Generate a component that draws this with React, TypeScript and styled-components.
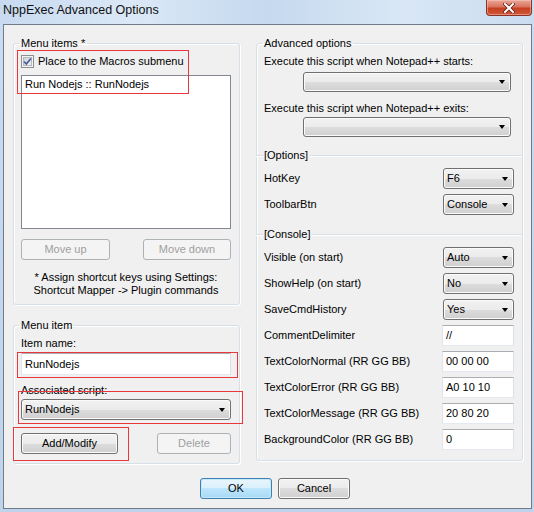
import React from 'react'
import styled, {createGlobalStyle, css} from 'styled-components'

const GlobalStyle = createGlobalStyle`
  html, body {
    margin: 0;
    padding: 0;
  }

  body {
    width: 534px;
    height: 512px;
    overflow: hidden;
    font-family: "Liberation Sans", Arial, sans-serif;
    font-size: 11px;
    line-height: 13px;
    color: #000;
  }
`

const Window = styled.div`
  position: relative;
  width: 534px;
  height: 512px;
  display: flex;
  flex-direction: column;
  background: linear-gradient(180deg, #c9dcf1 0%, #bfd3ea 100%);
`

const TitleBar = styled.div`
  height: 24px;
  flex: none;
  display: flex;
  justify-content: space-between;
  align-items: flex-start;
  padding-left: 3px;
  background: linear-gradient(90deg, #c7daf0 0%, #dbe8f6 25%, #c5d9ef 50%, #d9e7f5 75%, #cadcf0 100%);
`

const Title = styled.span`
  margin-top: 3px;
  font-size: 12.5px;
  line-height: 15px;
  color: #111;
`

const CloseButton = styled.div`
  width: 46px;
  height: 16px;
  margin-right: 2px;
  box-sizing: border-box;
  display: flex;
  align-items: center;
  justify-content: center;
  border: 1px solid #8a3223;
  border-top: none;
  border-radius: 0 0 4px 4px;
  background: linear-gradient(180deg, #e9a797 0%, #d9735e 45%, #c4401f 55%, #d1583c 100%);
  box-shadow: inset 0 0 0 1px rgba(255, 210, 200, 0.45);
`

const Client = styled.div`
  flex: 1;
  margin: 0 2px 3px 3px;
  border: 1px solid #6f7c8a;
  background: #f0f0f0;
  display: flex;
  flex-direction: column;
`

const Columns = styled.div`
  display: flex;
  gap: 16px;
  padding: 12px 8px 0 9px;
`

const Column = styled.div<{ $width: number }>`
  width: ${p => p.$width}px;
  display: flex;
  flex-direction: column;
  gap: 14px;
`

const GroupBox = styled.fieldset<{ $height: number }>`
  margin: 0;
  padding: 0 8px 0 7px;
  min-width: 0;
  height: ${p => p.$height}px;
  box-sizing: border-box;
  border: 1px solid #d5dfe5;
  border-radius: 3px;
  box-shadow: 1px 1px 0 #fff, inset 1px 1px 0 #fff;
  display: flex;
  flex-direction: column;
`

const Legend = styled.legend`
  padding: 0 2px;
  margin-left: -2px;
  line-height: 13px;
`

const SectionHeader = styled.div<{ $mt: number }>`
  display: flex;
  align-items: center;
  margin: ${p => p.$mt}px -8px 0 -8px;
  height: 13px;

  &::before, &::after {
    content: "";
    height: 1px;
    background: #d5dfe5;
    box-shadow: 0 1px 0 #fff;
  }

  &::before {
    width: 7px;
    margin-right: 1px;
  }

  &::after {
    flex: 1;
    margin-left: 2px;
  }
`

const CheckRow = styled.label`
  display: flex;
  align-items: center;
  gap: 4px;
  margin-top: 5px;
  height: 13px;
`

const ListBox = styled.div`
  margin-top: 7px;
  height: 154px;
  box-sizing: border-box;
  border: 1px solid #828790;
  background: #fff;
  padding: 2px 3px;
`

const ButtonRow = styled.div<{ $mt: number }>`
  display: flex;
  justify-content: space-between;
  margin-top: ${p => p.$mt}px;
`

const PushButton = styled.div<{ $width: number, $variant?: 'default' | 'disabled' | 'normal' }>`
  width: ${p => p.$width}px;
  height: 21px;
  box-sizing: border-box;
  display: flex;
  align-items: center;
  justify-content: center;
  border-radius: 3px;
  border: 1px solid #707070;
  background: linear-gradient(180deg, #f2f2f2 0%, #ebebeb 50%, #dddddd 50%, #cfcfcf 100%);
  box-shadow: inset 0 0 0 1px #fbfbfb;

  ${p => p.$variant === 'disabled' && css`
    border-color: #adb2b5;
    background: #f4f4f4;
    box-shadow: none;
    color: #a0a0a0;
  `}

  ${p => p.$variant === 'default' && css`
    border-color: #3c7fb1;
    background: linear-gradient(180deg, #eaf6fd 0%, #d9f0fc 50%, #bee6fd 50%, #a7d9f5 100%);
    box-shadow: inset 0 0 0 1px #c6e8f9, 0 0 0 0 transparent;
  `}
`

const Note = styled.div`
  margin-top: 11px;
  text-align: center;
`

const FieldLabel = styled.div<{ $mt: number }>`
  margin-top: ${p => p.$mt}px;
  height: 13px;
`

const TextInput = styled.div<{ $width?: number, $height: number, $mt?: number }>`
  ${p => p.$width ? `width: ${p.$width}px;` : ''}
  height: ${p => p.$height}px;
  margin-top: ${p => p.$mt ?? 0}px;
  box-sizing: border-box;
  flex: none;
  display: flex;
  align-items: center;
  padding-left: 3px;
  background: #fff;
  border: 1px solid;
  border-color: #abadb3 #dbdfe6 #e3e9ef #e2e3ea;
`

const Combo = styled.div<{ $width?: number, $height: number, $mt?: number, $ml?: number }>`
  ${p => p.$width ? `width: ${p.$width}px;` : ''}
  height: ${p => p.$height}px;
  margin-top: ${p => p.$mt ?? 0}px;
  margin-left: ${p => p.$ml ?? 0}px;
  box-sizing: border-box;
  flex: none;
  display: flex;
  align-items: center;
  justify-content: space-between;
  padding: 0 5px 0 3px;
  border: 1px solid #707070;
  border-radius: 3px;
  background: linear-gradient(180deg, #f2f2f2 0%, #ebebeb 50%, #dddddd 50%, #cfcfcf 100%);
  box-shadow: inset 0 0 0 1px #fbfbfb;
`

const Arrow = styled.span`
  width: 0;
  height: 0;
  border-left: 3.5px solid transparent;
  border-right: 3.5px solid transparent;
  border-top: 4px solid #000;
`

const OptionRow = styled.div<{ $height: number, $mt: number }>`
  display: flex;
  align-items: center;
  justify-content: space-between;
  height: ${p => p.$height}px;
  margin-top: ${p => p.$mt}px;
`

const Footer = styled.div`
  display: flex;
  gap: 6px;
  margin-top: 14px;
  padding-left: 196px;
`

const Highlight = styled.div<{ $x: number, $y: number, $w: number, $h: number }>`
  position: absolute;
  left: ${p => p.$x}px;
  top: ${p => p.$y}px;
  width: ${p => p.$w}px;
  height: ${p => p.$h}px;
  box-sizing: border-box;
  border: 1px solid #e8383d;
  pointer-events: none;
`

const CheckMark = () => (
  <svg width="13" height="13" viewBox="0 0 13 13">
    <defs>
      <linearGradient id="cbg" x1="0" y1="0" x2="1" y2="1">
        <stop offset="0" stopColor="#cbcfd5"/>
        <stop offset="1" stopColor="#f6f6f6"/>
      </linearGradient>
    </defs>
    <rect x="0.5" y="0.5" width="12" height="12" fill="#f4f4f4" stroke="#8e8f8f"/>
    <rect x="2.5" y="2.5" width="8" height="8" fill="url(#cbg)" stroke="#b4b8bf"/>
    <path d="M3 6.5 L5.3 9 L10 3.5" fill="none" stroke="#4a5f97" strokeWidth="1.8"/>
  </svg>
)

const CloseGlyph = () => (
  <svg width="12" height="10" viewBox="0 0 12 10">
    <path d="M2 1 L10 9 M10 1 L2 9" stroke="#5a1a10" strokeWidth="3.4" strokeLinecap="square"/>
    <path d="M2 1 L10 9 M10 1 L2 9" stroke="#fff" strokeWidth="2" strokeLinecap="square"/>
  </svg>
)

type Opt = { label: string, value: string, kind: 'combo' | 'edit' }

const options: Opt[] = [
  {label: 'HotKey', value: 'F6', kind: 'combo'},
  {label: 'ToolbarBtn', value: 'Console', kind: 'combo'},
]

const consoleOptions: Opt[] = [
  {label: 'Visible (on start)', value: 'Auto', kind: 'combo'},
  {label: 'ShowHelp (on start)', value: 'No', kind: 'combo'},
  {label: 'SaveCmdHistory', value: 'Yes', kind: 'combo'},
  {label: 'CommentDelimiter', value: '//', kind: 'edit'},
  {label: 'TextColorNormal (RR GG BB)', value: '00 00 00', kind: 'edit'},
  {label: 'TextColorError (RR GG BB)', value: 'A0 10 10', kind: 'edit'},
  {label: 'TextColorMessage (RR GG BB)', value: '20 80 20', kind: 'edit'},
  {label: 'BackgroundColor (RR GG BB)', value: '0', kind: 'edit'},
]

const renderOption = (o: Opt, i: number, first: number) => (
  <OptionRow key={o.label} $height={21} $mt={i === 0 ? 6 : first}>
    <span>{o.label}</span>
    {o.kind === 'combo'
      ? <Combo $width={71} $height={21}>{o.value}<Arrow/></Combo>
      : <TextInput $width={72} $height={21}>{o.value}</TextInput>}
  </OptionRow>
)

export default function App() {
  return (
    <Window>
      <GlobalStyle/>
      <TitleBar>
        <Title>NppExec Advanced Options</Title>
        <CloseButton><CloseGlyph/></CloseButton>
      </TitleBar>
      <Client>
        <Columns>
          <Column $width={227}>
            <GroupBox $height={268}>
              <Legend>Menu items *</Legend>
              <CheckRow><CheckMark/>Place to the Macros submenu</CheckRow>
              <ListBox>Run Nodejs :: RunNodejs</ListBox>
              <ButtonRow $mt={10}>
                <PushButton $width={89} $variant="disabled">Move up</PushButton>
                <PushButton $width={88} $variant="disabled">Move down</PushButton>
              </ButtonRow>
              <Note>
                * Assign shortcut keys using Settings:<br/>
                Shortcut Mapper -&gt; Plugin commands
              </Note>
            </GroupBox>
            <GroupBox $height={145}>
              <Legend>Menu item</Legend>
              <FieldLabel $mt={5}>Item name:</FieldLabel>
              <TextInput $height={22} $mt={3}>RunNodejs</TextInput>
              <FieldLabel $mt={9}>Associated script:</FieldLabel>
              <Combo $height={21} $mt={2}>RunNodejs<Arrow/></Combo>
              <ButtonRow $mt={13}>
                <PushButton $width={97}>Add/Modify</PushButton>
                <PushButton $width={74} $variant="disabled">Delete</PushButton>
              </ButtonRow>
            </GroupBox>
          </Column>
          <Column $width={267}>
            <GroupBox $height={424}>
              <Legend>Advanced options</Legend>
              <FieldLabel $mt={5}>Execute this script when Notepad++ starts:</FieldLabel>
              <Combo $width={208} $height={20} $mt={4} $ml={39}><span/><Arrow/></Combo>
              <FieldLabel $mt={10}>Execute this script when Notepad++ exits:</FieldLabel>
              <Combo $width={208} $height={20} $mt={2} $ml={39}><span/><Arrow/></Combo>
              <SectionHeader $mt={12}>[Options]</SectionHeader>
              {options.map((o, i) => renderOption(o, i, 5))}
              <SectionHeader $mt={13}>[Console]</SectionHeader>
              {consoleOptions.map((o, i) => renderOption(o, i, 5))}
            </GroupBox>
          </Column>
        </Columns>
        <Footer>
          <PushButton $width={72} $variant="default">OK</PushButton>
          <PushButton $width={72}>Cancel</PushButton>
        </Footer>
      </Client>
      <Highlight $x={17} $y={50} $w={172} $h={44}/>
      <Highlight $x={17} $y={352} $w={221} $h={26}/>
      <Highlight $x={18} $y={391} $w={225} $h={33}/>
      <Highlight $x={13} $y={427} $w={116} $h={34}/>
    </Window>
  )
}
